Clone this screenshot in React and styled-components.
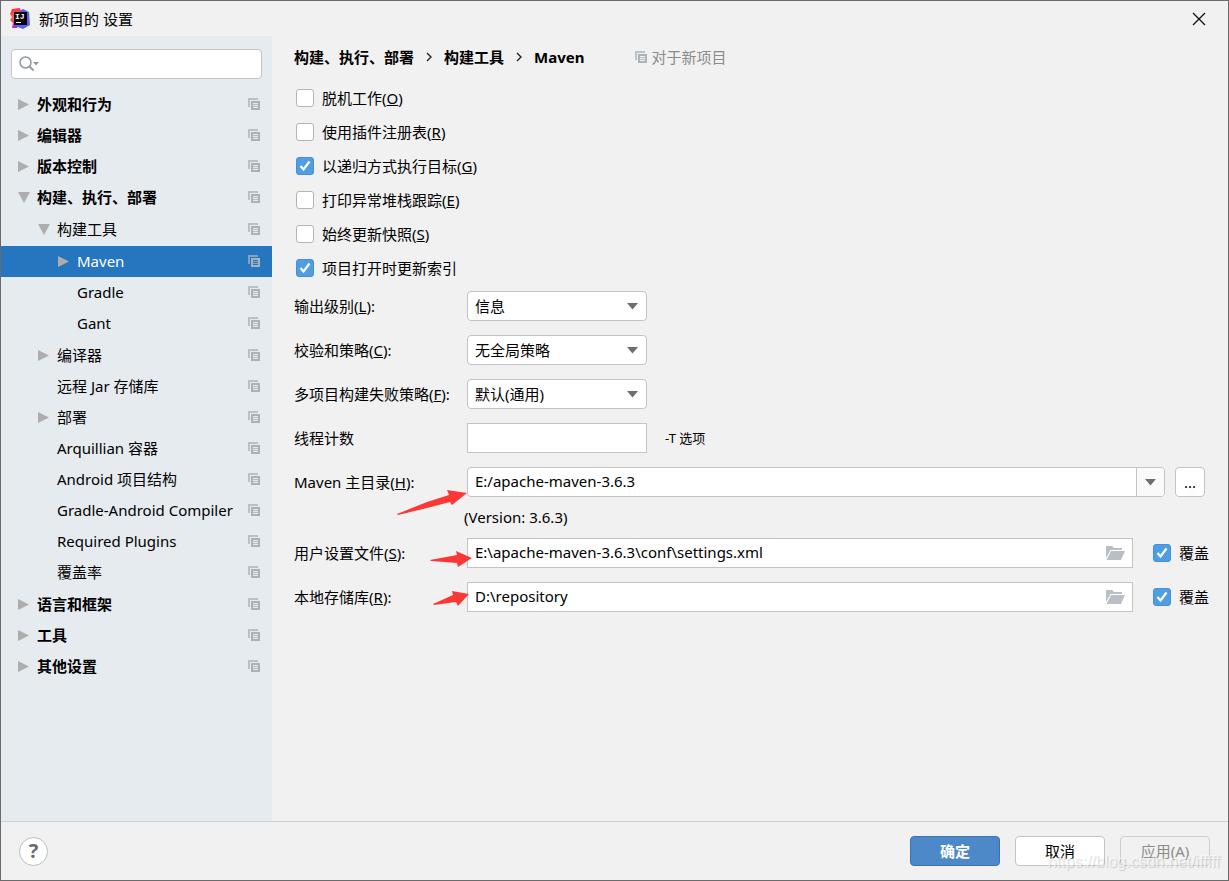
import React, { useState } from 'react';
import styled, { createGlobalStyle } from 'styled-components';

const GlobalS = createGlobalStyle`
  *, *::before, *::after {
    box-sizing: border-box;
  }

  body {
    margin: 0;
    background: #f1f1f1;
    color: #000;
    font-family: 'Noto Sans', 'Noto Sans CJK SC', sans-serif;
    font-size: 15px;
    line-height: 20px;
  }

  button, input, select {
    font: inherit;
    color: inherit;
  }
`;

const DialogS = styled.div`
  display: flex;
  flex-direction: column;
  min-height: 100vh;
  border: 1px solid #6b6b6b;
  background: #f1f1f1;
`;

const TitleBarS = styled.header`
  display: flex;
  align-items: center;
  height: 35px;
  padding: 0 20px 0 8px;
`;

const TitleS = styled.h1`
  flex: 1;
  margin: 0 0 0 8px;
  font-size: 15px;
  font-weight: 400;
`;

const CloseButtonS = styled.button`
  display: flex;
  padding: 2px;
  border: 0;
  background: none;
  cursor: pointer;
`;

const BodyS = styled.div`
  display: flex;
  flex: 1;
`;

/* sidebar */

const SidebarS = styled.nav`
  width: 271px;
  flex-shrink: 0;
  padding-top: 13px;
  background: #e6ebef;
`;

const SearchS = styled.label`
  display: flex;
  align-items: center;
  height: 30px;
  margin: 0 10px 10px;
  padding-left: 7px;
  border: 1px solid #c4c4c4;
  border-radius: 4px;
  background: #fff;
`;

const SearchInputS = styled.input`
  flex: 1;
  min-width: 0;
  border: 0;
  outline: 0;
  background: none;
`;

const TreeS = styled.ul`
  margin: 0;
  padding: ${(props) => (props.$nested ? '1px 0' : '0')};
  list-style: none;
`;

const TreeRowS = styled.button`
  display: flex;
  align-items: center;
  width: 100%;
  height: 31px;
  padding: 0 11px 0 ${(props) => 16 + props.$level * 20}px;
  border: 0;
  background: ${(props) => (props.$selected ? '#2675bf' : 'none')};
  color: ${(props) => (props.$selected ? '#fff' : '#000')};
  font-weight: ${(props) => (props.$level === 0 ? 700 : 400)};
  text-align: left;
  white-space: nowrap;
  cursor: pointer;
`;

const ToggleS = styled.span`
  display: flex;
  width: 20px;
`;

const TreeTextS = styled.span`
  flex: 1;
  padding-bottom: 2px;
`;

/* content */

const ContentS = styled.main`
  flex: 1;
  min-width: 0;
  padding: 11px 19px 20px 22px;
`;

const BreadcrumbS = styled.div`
  display: flex;
  align-items: center;
  gap: 12px;
  margin-bottom: 14px;
  font-weight: 700;
`;

const ScopeS = styled.span`
  display: flex;
  align-items: center;
  gap: 3px;
  margin-left: 39px;
  color: #8c8c8c;
  font-weight: 400;
`;

const CheckListS = styled.div`
  display: flex;
  flex-direction: column;
  align-items: flex-start;
  margin-bottom: 6px;
`;

const CheckLabelS = styled.label`
  display: flex;
  align-items: center;
  gap: 8px;
  height: ${(props) => props.$height || '34px'};
  padding-left: 2px;
  white-space: nowrap;
`;

const CheckStackS = styled.span`
  display: grid;
  place-items: center;

  > * {
    grid-area: 1 / 1;
  }

  svg {
    pointer-events: none;
  }
`;

const CheckboxS = styled.input`
  appearance: none;
  width: 18px;
  height: 18px;
  margin: 0;
  border: 1px solid #b4b4b4;
  border-radius: 3px;
  background: #fff;

  &:checked {
    border-color: #4690d8;
    background: #4f9ee3;
  }
`;

const FieldRowS = styled.div`
  position: relative;
  display: flex;
  align-items: center;
  min-height: 30px;
  margin-bottom: ${(props) => props.$gap || '14px'};
`;

const FieldLabelS = styled.label`
  width: 173px;
  flex-shrink: 0;
  padding-bottom: 1px;
  white-space: nowrap;
`;

const SelectBoxS = styled.span`
  display: grid;
  align-items: center;
  width: 180px;

  > * {
    grid-area: 1 / 1;
  }

  svg {
    justify-self: end;
    margin-right: 9px;
    pointer-events: none;
  }
`;

const SelectS = styled.select`
  appearance: none;
  height: 30px;
  padding: 0 24px 0 7px;
  border: 1px solid #c4c4c4;
  border-radius: 4px;
  background: #fff;
`;

const TextInputS = styled.input`
  width: 180px;
  height: 30px;
  padding: 0 7px;
  border: 1px solid #c4c4c4;
  background: #fff;
`;

const HintS = styled.span`
  margin-left: 18px;
  font-size: 13px;
`;

const InputBoxS = styled.div`
  display: flex;
  flex: 1;
  min-width: 0;
  height: 30px;
  overflow: hidden;
  border: 1px solid #c4c4c4;
  border-radius: ${(props) => props.$radius || '0'};
  background: #fff;
`;

const InnerInputS = styled.input`
  flex: 1;
  min-width: 0;
  padding: 0 7px 3px;
  border: 0;
  outline: 0;
  background: none;
`;

const DropButtonS = styled.button`
  display: flex;
  align-items: center;
  justify-content: center;
  width: 28px;
  padding: 0;
  border: 0;
  border-left: 1px solid #c4c4c4;
  background: #fafafa;
`;

const FolderButtonS = styled.button`
  display: flex;
  align-items: center;
  padding: 0 7px 0 0;
  border: 0;
  background: none;
`;

const MoreButtonS = styled.button`
  width: 30px;
  height: 30px;
  margin: 0 4px 0 10px;
  padding: 0;
  border: 1px solid #c4c4c4;
  border-radius: 4px;
  background: #fff;
`;

const OverrideS = styled.div`
  margin-left: 18px;
`;

const VersionS = styled.div`
  margin-bottom: 8px;
  padding-left: 170px;
  line-height: 26px;
`;

const PointerS = styled.svg`
  position: absolute;
  left: ${(props) => props.$left};
  top: ${(props) => props.$top};
  fill: #fb3836;
  pointer-events: none;
`;

/* footer */

const FooterS = styled.footer`
  position: relative;
  display: flex;
  align-items: center;
  gap: 15px;
  height: 59px;
  padding: 0 18px;
  border-top: 1px solid #cfcfcf;
`;

const HelpButtonS = styled.button`
  width: 29px;
  height: 29px;
  margin-right: auto;
  padding: 0;
  border: 1px solid #bdbdbd;
  border-radius: 50%;
  background: #fff;
  color: #6b6b6b;
  font-size: 20px;
  font-weight: 700;
`;

const ButtonS = styled.button`
  width: 90px;
  height: 30px;
  padding: 0;
  border: 1px solid ${(props) => (props.$primary ? '#3a73b4' : '#c4c4c4')};
  border-radius: 4px;
  background: ${(props) => (props.$primary ? '#4d89c9' : '#fff')};
  color: ${(props) => (props.$primary ? '#fff' : '#000')};
  font-weight: ${(props) => (props.$primary ? 700 : 400)};

  &:disabled {
    border-color: #cfcfcf;
    background: none;
    color: #8c8c8c;
  }
`;

const WatermarkS = styled.span`
  position: absolute;
  right: 8px;
  bottom: 8px;
  color: rgba(255, 255, 255, 0.6);
  font-family: 'Liberation Sans', sans-serif;
  font-size: 16px;
  text-shadow: 1px 1px 1px rgba(0, 0, 0, 0.16);
  pointer-events: none;
`;

function LogoIcon() {
  return <svg width='22' height='22' viewBox='0 0 22 22' aria-hidden='true'>
    <defs>
      <linearGradient id='logoPink' x1='0' y1='0' x2='0' y2='1'>
        <stop offset='0' stopColor='#fe2857' />
        <stop offset='0.5' stopColor='#fc6a2c' />
        <stop offset='1' stopColor='#af1df5' />
      </linearGradient>
      <linearGradient id='logoBlue' x1='0' y1='0' x2='1' y2='1'>
        <stop offset='0' stopColor='#e6317c' />
        <stop offset='0.4' stopColor='#3c6df0' />
        <stop offset='1' stopColor='#6b57ff' />
      </linearGradient>
    </defs>
    <path d='M3 1 L11 0 L13 10 L8 20 L3 20 L4 15 L1 12 L3 9 L1 6 Z' fill='url(#logoPink)' />
    <path d='M10 3 L14 1 L20 4 L21 17 L14 21 L6 18 L16 14 Z' fill='url(#logoBlue)' />
    <rect x='5' y='4' width='13' height='13' fill='#0b0507' />
    <text x='6' y='11' fill='#fff' fontFamily='Liberation Mono, monospace' fontSize='8' fontWeight='700'>IJ</text>
    <rect x='7' y='14' width='5' height='1' fill='#fff' />
  </svg>
}

function CopyIcon() {
  return <svg width='13' height='13' viewBox='0 0 13 13' aria-hidden='true'>
    <path d='M0 0 H10 V2 H2 V9 H0 Z' fill='#a9b2b9' opacity='0.75' />
    <path d='M3 3 H12 V12 H3 Z M5 5 V10 H10 V5 Z' fill='#a9b2b9' fillRule='evenodd' />
    <path d='M5 6.5 H10 M5 8.5 H10' stroke='#a9b2b9' opacity='0.8' />
  </svg>
}

function ArrowRight() {
  return <svg width='13' height='12' viewBox='0 0 13 12' aria-hidden='true'>
    <path d='M1 0 L12 5.5 L1 11 Z' fill='#adadad' />
  </svg>
}

function ArrowDown() {
  return <svg width='13' height='12' viewBox='0 0 13 12' aria-hidden='true'>
    <path d='M1 0 H13 L7 11 Z' fill='#adadad' />
  </svg>
}

function Caret() {
  return <svg width='11' height='8' viewBox='0 0 11 8' aria-hidden='true'>
    <path d='M0 1 H11 L5.5 7.5 Z' fill='#6e6e6e' />
  </svg>
}

function Chevron() {
  return <svg width='6' height='10' viewBox='0 0 6 10' aria-hidden='true'>
    <path d='M1 1 L5 5 L1 9' fill='none' stroke='#222' strokeWidth='1.4' />
  </svg>
}

function FolderIcon() {
  return <svg width='19' height='14' viewBox='0 0 19 14' aria-hidden='true'>
    <path d='M0 0 H6 L8 2 H16 V4 H4.5 L0 12 Z' fill='#b9bfc4' />
    <path d='M5 5 H19 L15 14 H0.5 Z' fill='#b9bfc4' />
  </svg>
}

function SearchIcon() {
  return <svg width='21' height='16' viewBox='0 0 21 16' aria-hidden='true'>
    <circle cx='6.5' cy='6.5' r='5.5' fill='none' stroke='#8e999f' strokeWidth='1.5' />
    <path d='M10.5 10.5 L14.5 14.5' stroke='#8e999f' strokeWidth='1.8' />
    <path d='M14 6 H20 L17 9.5 Z' fill='#8e999f' />
  </svg>
}

const tree = [
  { text: '外观和行为', closed: true },
  { text: '编辑器', closed: true },
  { text: '版本控制', closed: true },
  {
    text: '构建、执行、部署',
    children: [
      {
        text: '构建工具',
        children: [
          { text: 'Maven', closed: true },
          { text: 'Gradle' },
          { text: 'Gant' },
        ],
      },
      { text: '编译器', closed: true },
      { text: '远程 Jar 存储库' },
      { text: '部署', closed: true },
      { text: 'Arquillian 容器' },
      { text: 'Android 项目结构' },
      { text: 'Gradle-Android Compiler' },
      { text: 'Required Plugins' },
      { text: '覆盖率' },
    ],
  },
  { text: '语言和框架', closed: true },
  { text: '工具', closed: true },
  { text: '其他设置', closed: true },
];

function Tree({ items, level = 0, selected, onSelect }) {
  return <TreeS $nested={level > 0}>
    {items.map((item) => (
      <li key={item.text}>
        <TreeRowS
          type='button'
          $level={level}
          $selected={item.text === selected}
          onClick={() => onSelect(item.text)}
        >
          <ToggleS>
            {item.closed && <ArrowRight />}
            {item.children && <ArrowDown />}
          </ToggleS>
          <TreeTextS>{item.text}</TreeTextS>
          <CopyIcon />
        </TreeRowS>
        {item.children && <Tree items={item.children} level={level + 1} selected={selected} onSelect={onSelect} />}
      </li>
    ))}
  </TreeS>
}

// text with its underlined access key, e.g. 脱机工作(O)
function Mnemonic({ text, letter, end }) {
  return <span>{text}{letter && <>(<u>{letter}</u>)</>}{end}</span>
}

function Check({ text, letter, checked, height }) {
  const [on, setOn] = useState(Boolean(checked));

  return <CheckLabelS $height={height}>
    <CheckStackS>
      <CheckboxS type='checkbox' checked={on} onChange={() => setOn(!on)} />
      {on && <svg width='12' height='12' viewBox='0 0 12 12' aria-hidden='true'>
        <path d='M1.5 6 L4.5 9.5 L10.5 1.5' fill='none' stroke='#fff' strokeWidth='2.2' />
      </svg>}
    </CheckStackS>
    <Mnemonic text={text} letter={letter} />
  </CheckLabelS>
}

function SelectField({ id, text, letter, value }) {
  return <FieldRowS>
    <FieldLabelS htmlFor={id}><Mnemonic text={text} letter={letter} end=':' /></FieldLabelS>
    <SelectBoxS>
      <SelectS id={id} defaultValue={value}>
        <option>{value}</option>
      </SelectS>
      <Caret />
    </SelectBoxS>
  </FieldRowS>
}

function FileField({ id, text, letter, value, children }) {
  return <FieldRowS>
    <FieldLabelS htmlFor={id}><Mnemonic text={text} letter={letter} end=':' /></FieldLabelS>
    <InputBoxS>
      <InnerInputS id={id} defaultValue={value} />
      <FolderButtonS type='button' aria-label='浏览'><FolderIcon /></FolderButtonS>
    </InputBoxS>
    <OverrideS><Check text='覆盖' checked height='30px' /></OverrideS>
    {children}
  </FieldRowS>
}

function App() {
  const [selected, setSelected] = useState('Maven');

  return <DialogS>
      <GlobalS />
      <TitleBarS>
        <LogoIcon />
        <TitleS>新项目的 设置</TitleS>
        <CloseButtonS type='button' aria-label='关闭'>
          <svg width='14' height='14' viewBox='0 0 14 14' aria-hidden='true'>
            <path d='M1 1 L13 13 M13 1 L1 13' stroke='#111' strokeWidth='1.3' />
          </svg>
        </CloseButtonS>
      </TitleBarS>

      <BodyS>
        <SidebarS>
          <SearchS>
            <SearchIcon />
            <SearchInputS type='text' aria-label='搜索' />
          </SearchS>
          <Tree items={tree} selected={selected} onSelect={setSelected} />
        </SidebarS>

        <ContentS>
          <BreadcrumbS>
            <span>构建、执行、部署</span>
            <Chevron />
            <span>构建工具</span>
            <Chevron />
            <span>Maven</span>
            <ScopeS><CopyIcon />对于新项目</ScopeS>
          </BreadcrumbS>

          <CheckListS>
            <Check text='脱机工作' letter='O' />
            <Check text='使用插件注册表' letter='R' />
            <Check text='以递归方式执行目标' letter='G' checked />
            <Check text='打印异常堆栈跟踪' letter='E' />
            <Check text='始终更新快照' letter='S' />
            <Check text='项目打开时更新索引' checked />
          </CheckListS>

          <SelectField id='output' text='输出级别' letter='L' value='信息' />
          <SelectField id='checksum' text='校验和策略' letter='C' value='无全局策略' />
          <SelectField id='failure' text='多项目构建失败策略' letter='F' value='默认(通用)' />

          <FieldRowS>
            <FieldLabelS htmlFor='threads'>线程计数</FieldLabelS>
            <TextInputS id='threads' type='text' />
            <HintS>-T 选项</HintS>
          </FieldRowS>

          <FieldRowS $gap='7px'>
            <FieldLabelS htmlFor='home'><Mnemonic text='Maven 主目录' letter='H' end=':' /></FieldLabelS>
            <InputBoxS $radius='4px'>
              <InnerInputS id='home' defaultValue='E:/apache-maven-3.6.3' />
              <DropButtonS type='button' aria-label='展开'><Caret /></DropButtonS>
            </InputBoxS>
            <MoreButtonS type='button'>...</MoreButtonS>
            <PointerS $left='103px' $top='22px' width='70' height='27' viewBox='0 0 70 27' aria-hidden='true'>
              <path d='M0 25 L30 13 L52 6 L50 1 L70 4 L55 16 L53 13 L30 19 L1 26 Z' />
            </PointerS>
          </FieldRowS>
          <VersionS>(Version: 3.6.3)</VersionS>

          <FileField id='settings' text='用户设置文件' letter='S' value='E:\apache-maven-3.6.3\conf\settings.xml'>
            <PointerS $left='136px' $top='13px' width='43' height='16' viewBox='0 0 43 16' aria-hidden='true'>
              <path d='M0 9 L27 4 L26 0 L42 7 L28 16 L27 12 L1 10 Z' />
            </PointerS>
          </FileField>
          <FileField id='repository' text='本地存储库' letter='R' value='D:\repository'>
            <PointerS $left='139px' $top='9px' width='37' height='16' viewBox='0 0 37 16' aria-hidden='true'>
              <path d='M0 13 L20 4 L19 0 L36 3 L25 15 L23 11 L1 14 Z' />
            </PointerS>
          </FileField>
        </ContentS>
      </BodyS>

      <FooterS>
        <HelpButtonS type='button' aria-label='帮助'>?</HelpButtonS>
        <ButtonS type='button' $primary>确定</ButtonS>
        <ButtonS type='button'>取消</ButtonS>
        <ButtonS type='button' disabled>应用(A)</ButtonS>
        <WatermarkS>https://blog.csdn.net/ifffff</WatermarkS>
      </FooterS>
    </DialogS>
}

export default App;
